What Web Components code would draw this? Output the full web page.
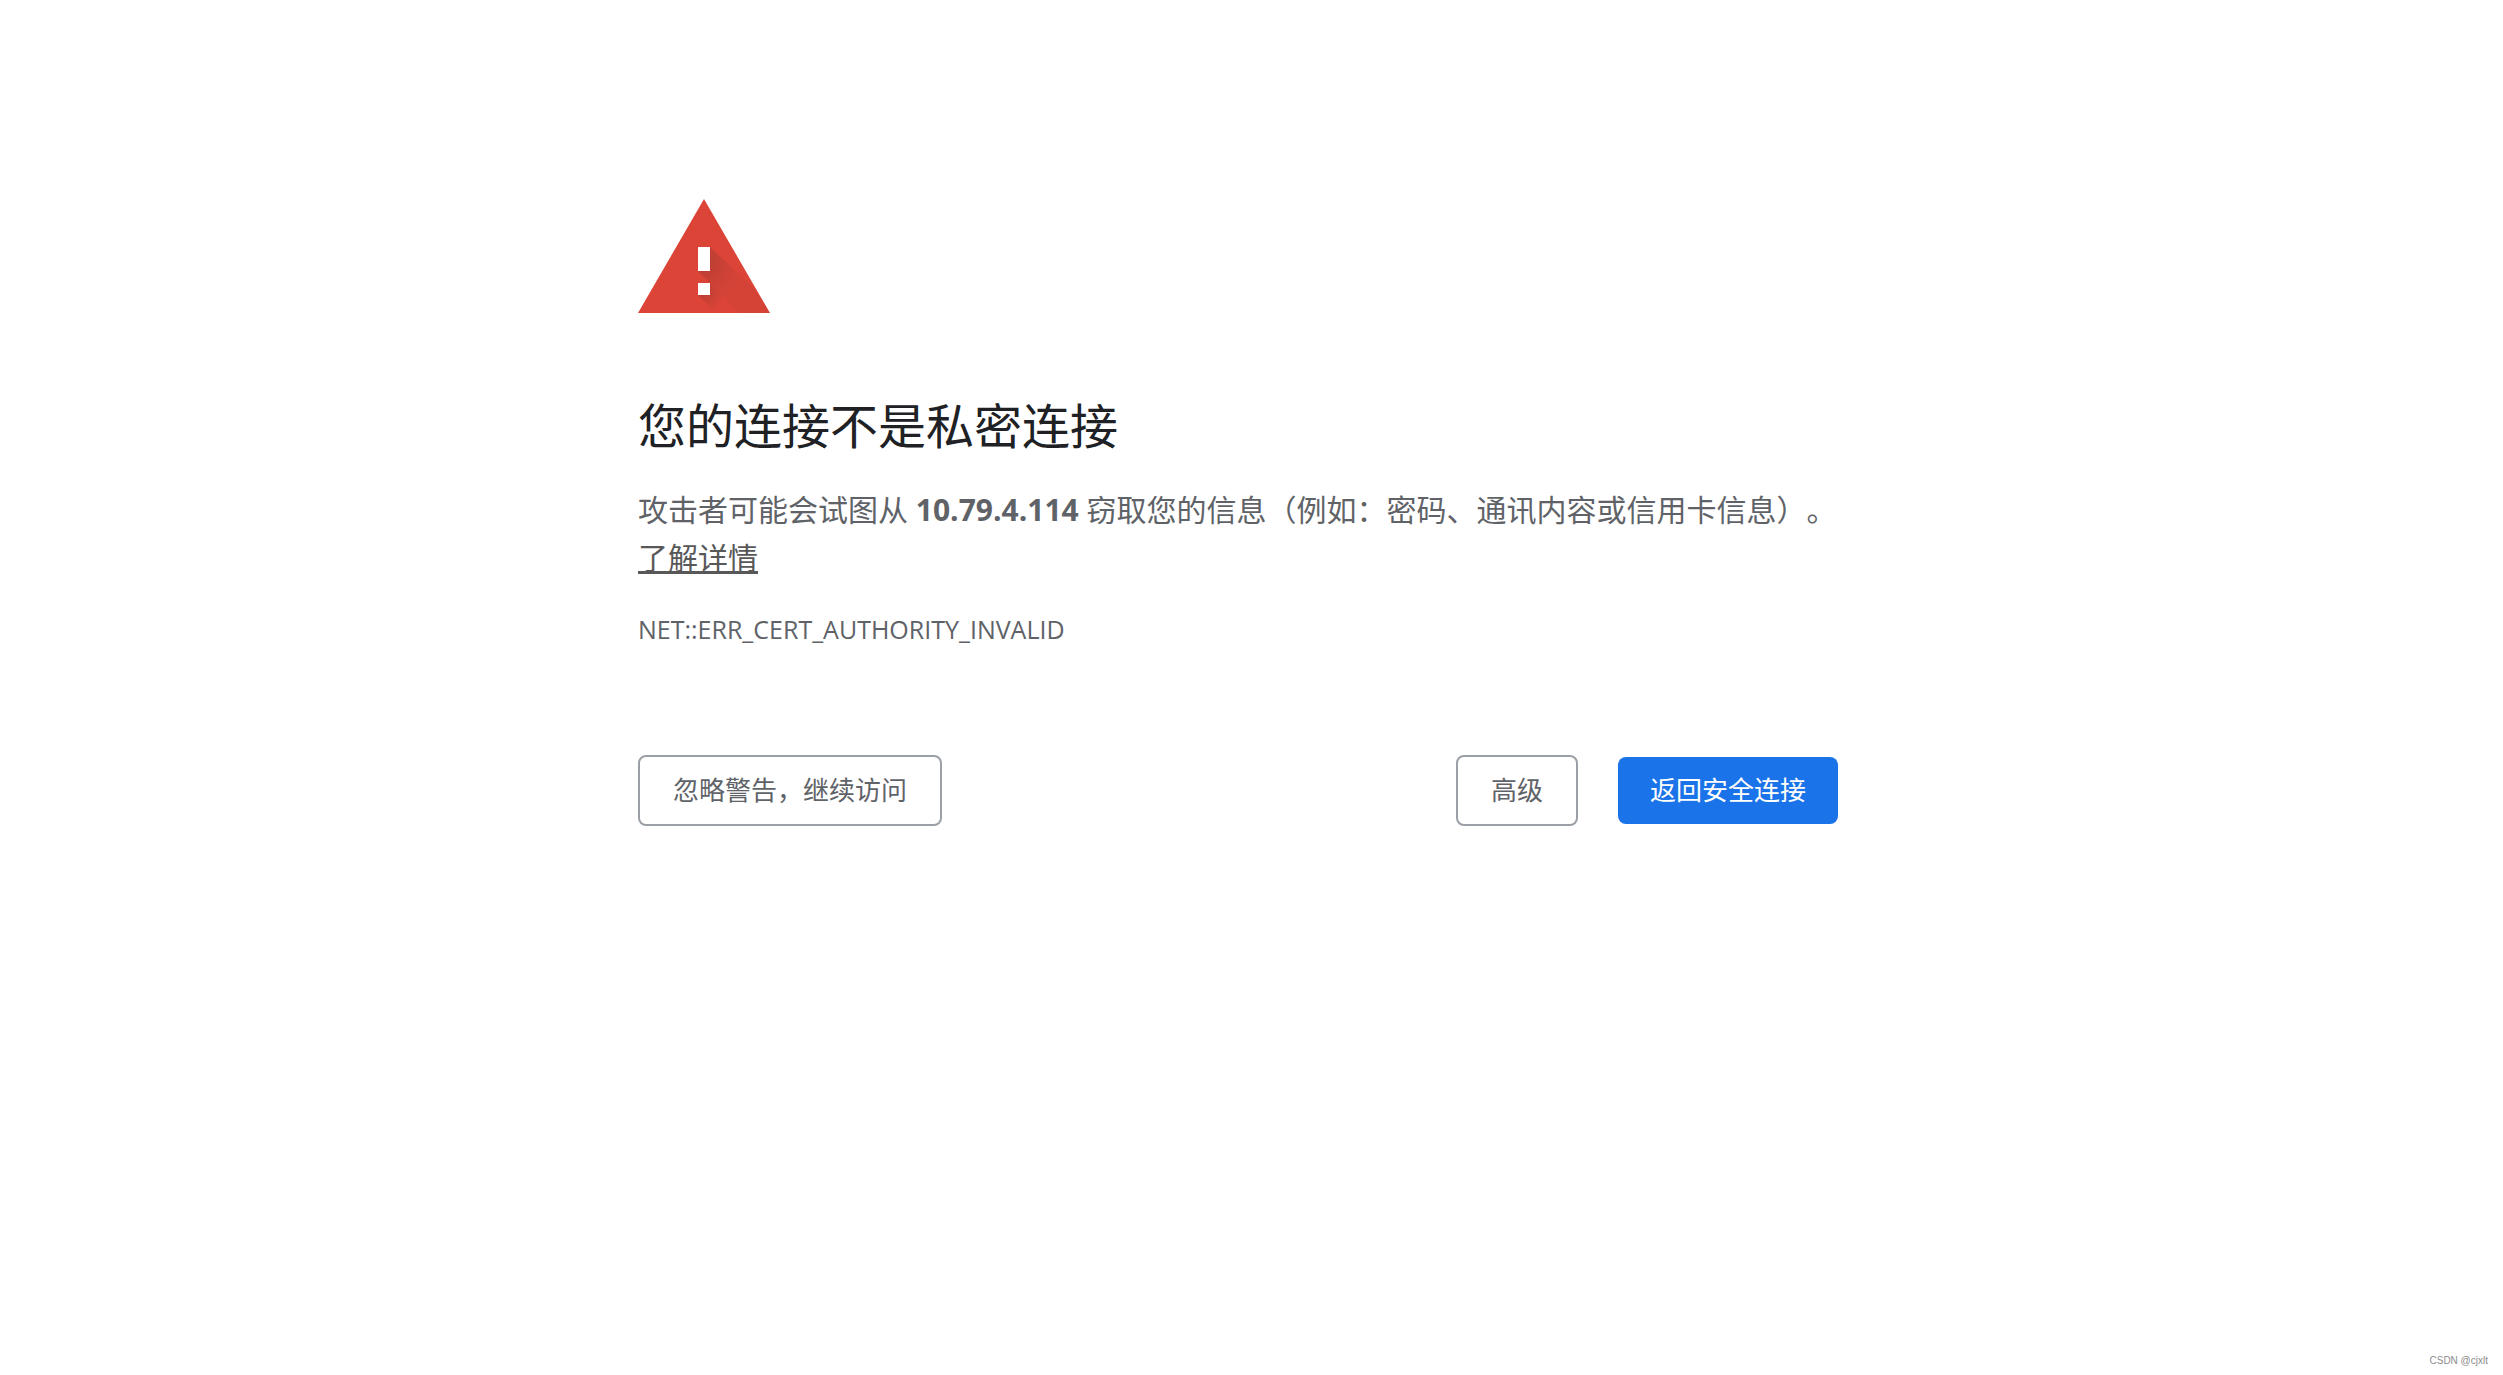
<!DOCTYPE html>
<html lang="zh-CN">
<head>
<meta charset="utf-8">
<title>隐私设置错误</title>
<style>
html, body { margin: 0; background: #fff; }
body {
  font-family: "Open Sans", "Noto Sans CJK SC", sans-serif;
  color: #5f6368;
  text-spacing-trim: space-all;
}
</style>
</head>
<body>
<interstitial-page>
  <warning-icon slot="icon"></warning-icon>
  <warning-message slot="message" code="NET::ERR_CERT_AUTHORITY_INVALID">
    <span slot="title">您的连接不是私密连接</span>
    攻击者可能会试图从 <strong>10.79.4.114</strong> 窃取您的信息（例如：密码、通讯内容或信用卡信息）。
    <span slot="link">了解详情</span>
  </warning-message>
  <action-button slot="start">忽略警告，继续访问</action-button>
  <action-button slot="end">高级</action-button>
  <action-button slot="end" primary>返回安全连接</action-button>
  <span slot="mark">CSDN @cjxlt</span>
</interstitial-page>
<script>
const attach = (el, html) => { el.attachShadow({ mode: 'open' }).innerHTML = html; };

customElements.define('interstitial-page', class extends HTMLElement {
  constructor() {
    super();
    attach(this, `<style>
      :host { display: flex; flex-direction: column; min-height: 100vh; box-sizing: border-box; }
      main { width: 100%; max-width: 1200px; box-sizing: border-box; margin: 0 auto; padding-top: 199px; }
      .wrap { padding: 0 27px 0 0; flex: 1; }
      .row { display: flex; align-items: center; justify-content: space-between; flex-wrap: wrap; gap: 24px; margin-top: 108px; }
      .end { display: flex; align-items: center; gap: 40px; }
      footer { text-align: right; padding: 0 15px 7px 0; font: 10px/14px "Liberation Sans", sans-serif; color: #8c8c8c; }
    </style>
    <div class="wrap"><main>
      <slot name="icon"></slot>
      <slot name="message"></slot>
      <div class="row"><slot name="start"></slot><div class="end"><slot name="end"></slot></div></div>
    </main></div>
    <footer><slot name="mark"></slot></footer>`);
  }
});

customElements.define('warning-icon', class extends HTMLElement {
  constructor() {
    super();
    attach(this, `<style>
      :host { display: block; }
      svg { display: block; }
    </style>
    <svg width="132" height="114" viewBox="0 0 132 114" aria-hidden="true">
      <defs>
        <radialGradient id="s" gradientUnits="userSpaceOnUse" cx="64" cy="62" r="44">
          <stop offset="0" stop-color="#3e2723" stop-opacity=".24"/><stop offset=".4" stop-color="#3e2723" stop-opacity=".13"/><stop offset=".8" stop-color="#3e2723" stop-opacity=".05"/><stop offset="1" stop-color="#3e2723" stop-opacity=".04"/>
        </radialGradient>
        <radialGradient id="t" gradientUnits="userSpaceOnUse" cx="63" cy="91" r="24">
          <stop offset="0" stop-color="#3e2723" stop-opacity=".24"/><stop offset=".5" stop-color="#3e2723" stop-opacity=".12"/><stop offset="1" stop-color="#3e2723" stop-opacity="0"/>
        </radialGradient>
      </defs>
      <path fill="#db4437" d="M66 0 132 114H0z"/>
      <path fill="url(#s)" d="M72 48 118 91 132 114H102L60 72z"/>
      <path fill="url(#t)" d="M72 84 102 114H78L60 96z"/>
      <path fill="#fff" d="M60 48h12v24H60zM60 84h12v12H60z"/>
    </svg>`);
  }
});

customElements.define('warning-message', class extends HTMLElement {
  constructor() {
    super();
    attach(this, `<style>
      :host { display: block; }
      h1 { margin: 83px 0 30px; font-size: 48px; line-height: 60px; font-weight: 400; color: #202124; }
      p { margin: 0; font-size: 30px; line-height: 48px; }
      a { color: #585858; text-decoration: underline; text-decoration-thickness: 3px; text-underline-offset: 2px; text-decoration-skip-ink: none; }
      .code { margin-top: 29px; font-size: 25px; line-height: 36px; }
    </style>
    <h1><slot name="title"></slot></h1>
    <p><slot></slot><br><a href="#"><slot name="link"></slot></a></p>
    <div class="code"></div>`);
  }
  connectedCallback() {
    this.shadowRoot.querySelector('.code').textContent = this.getAttribute('code');
  }
});

customElements.define('action-button', class extends HTMLElement {
  constructor() {
    super();
    attach(this, `<style>
      :host { display: block; }
      button {
        display: block; box-sizing: border-box; margin: 0; padding: 15px 33px;
        font-family: inherit; font-size: 26px; line-height: 37px;
        color: #5f6368; background: #fff; border: 2px solid #9aa0a6; border-radius: 8px; cursor: pointer;
      }
      :host([primary]) button { padding: 15px 32px; color: #fff; background: #1a73e8; border: 0; }
    </style>
    <button type="button"><slot></slot></button>`);
  }
});
</script>
</body>
</html>
